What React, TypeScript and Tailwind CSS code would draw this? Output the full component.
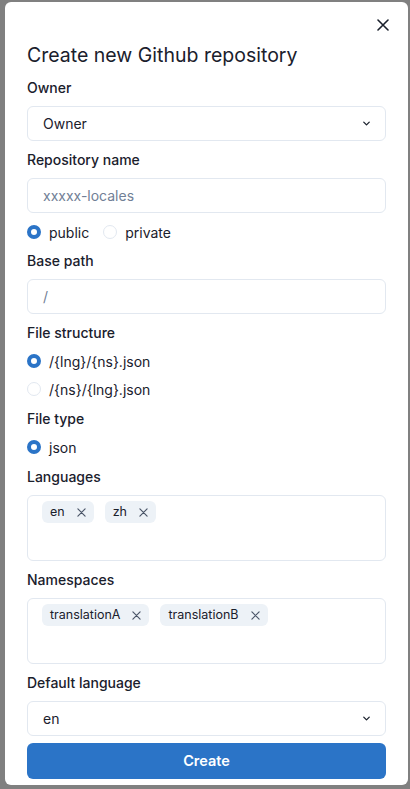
import React from "react";

const font = { fontFamily: "Inter, 'Noto Sans', sans-serif" };

function Label({ children }: { children: React.ReactNode }) {
  return (
    <div className="text-[14px] leading-[22px] font-medium text-[#1a202c] mb-[7px]">{children}</div>
  );
}

function Chevron() {
  return (
    <svg width="11" height="11" viewBox="0 0 24 24" fill="none" stroke="#1a202c" strokeWidth="2.8" strokeLinecap="round" strokeLinejoin="round">
      <path d="M6 9l6 6 6-6" />
    </svg>
  );
}

function Select({ value }: { value: string }) {
  return (
    <div className="h-[35px] border border-[#e2e8f0] rounded-md flex items-center justify-between pl-[15px] pr-[13px] text-[14px] text-[#1a202c]">
      <span>{value}</span>
      <Chevron />
    </div>
  );
}

function Input({ placeholder }: { placeholder: string }) {
  return (
    <div className="h-[35px] border border-[#e2e8f0] rounded-md flex items-center pl-[15px] text-[14px] text-[#718096]">
      {placeholder}
    </div>
  );
}

function Radio({ checked, label }: { checked?: boolean; label: string }) {
  return (
    <div className="flex items-center h-[20px] gap-2">
      {checked ? (
        <span className="w-[14px] h-[14px] rounded-full border-[4px] border-[#2b74c7] bg-white" />
      ) : (
        <span className="w-[14px] h-[14px] rounded-full border-[1.5px] border-[#e2e8f0] bg-white" />
      )}
      <span className="text-[14px] text-[#1a202c]">{label}</span>
    </div>
  );
}

function XSmall() {
  return (
    <svg width="9" height="9" viewBox="0 0 10 10" fill="none" stroke="#4a5568" strokeWidth="1.3" strokeLinecap="round">
      <path d="M1 1l8 8M9 1l-8 8" />
    </svg>
  );
}

function Tag({ label }: { label: string }) {
  return (
    <div className="h-[22px] rounded-md bg-[#edf2f7] flex items-center pl-2 pr-[8px] gap-[12px] text-[12.5px] text-[#1a202c]">
      <span>{label}</span>
      <XSmall />
    </div>
  );
}

function TagBox({ tags }: { tags: string[] }) {
  return (
    <div className="h-[66px] border border-[#e2e8f0] rounded-md pt-[5px] pl-[14px] flex items-start gap-[11px]">
      {tags.map((t) => (
        <Tag key={t} label={t} />
      ))}
    </div>
  );
}

export default function App() {
  return (
    <div className="w-[410px] h-[789px] bg-[#808080] overflow-hidden pt-[2px]" style={font}>
      <div className="relative ml-[5px] w-[403px] h-[783px] bg-white rounded-md pl-[22px] pr-[22px] pt-[39px]">
        <button className="absolute right-[18px] top-[16px] w-[14px] h-[14px] flex items-center justify-center">
          <svg width="12" height="12" viewBox="0 0 12 12" fill="none" stroke="#1a202c" strokeWidth="1.6" strokeLinecap="round">
            <path d="M1 1l10 10M11 1L1 11" />
          </svg>
        </button>
        <div className="text-[19.5px] leading-[28px] text-[#1a202c] mb-[8px]">Create new Github repository</div>

        <div className="flex flex-col">
          <div>
            <Label>Owner</Label>
            <Select value="Owner" />
          </div>
          <div className="mt-[8px]">
            <Label>Repository name</Label>
            <Input placeholder="xxxxx-locales" />
            <div className="flex gap-[14px] mt-[9px]">
              <Radio checked label="public" />
              <Radio label="private" />
            </div>
          </div>
          <div className="mt-[8px]">
            <Label>Base path</Label>
            <Input placeholder="/" />
          </div>
          <div className="mt-[8px]">
            <Label>File structure</Label>
            <div className="flex flex-col gap-[8px]">
              <Radio checked label="/{lng}/{ns}.json" />
              <Radio label="/{ns}/{lng}.json" />
            </div>
          </div>
          <div className="mt-[9px]">
            <Label>File type</Label>
            <Radio checked label="json" />
          </div>
          <div className="mt-[9px]">
            <Label>Languages</Label>
            <TagBox tags={["en", "zh"]} />
          </div>
          <div className="mt-[8px]">
            <Label>Namespaces</Label>
            <TagBox tags={["translationA", "translationB"]} />
          </div>
          <div className="mt-[8px]">
            <Label>Default language</Label>
            <Select value="en" />
          </div>
        </div>
        <button className="mt-[7px] w-full h-[36px] rounded-md bg-[#2b74c7] text-white font-semibold text-[14.5px]">
          Create
        </button>
      </div>
    </div>
  );
}
